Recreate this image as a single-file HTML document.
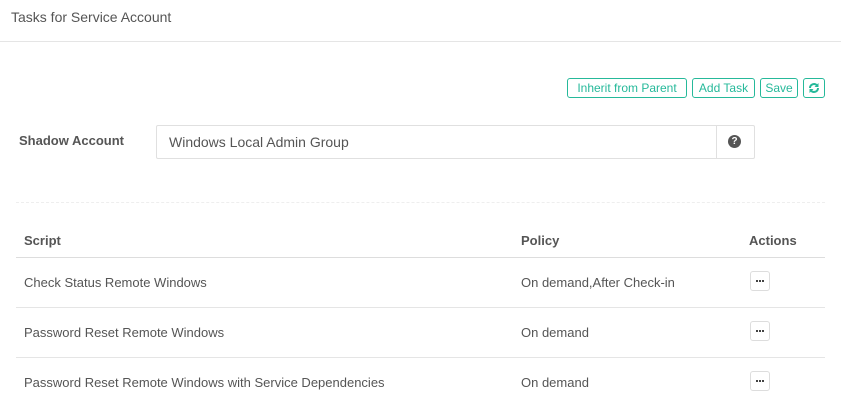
<!DOCTYPE html><html><head><style>
body{margin:0;width:841px;height:410px;background:#fff;font-family:"Liberation Sans",sans-serif;color:#555;position:relative;overflow:hidden}
.a{position:absolute;white-space:nowrap}
.btn{position:absolute;top:78px;height:18px;border:1px solid #26b99a;border-radius:3px;color:#26b99a;font-size:12px;line-height:18px;text-align:center}
.line{position:absolute;left:16px;width:809px;height:1px;background:#e5e5e5}
.ab{position:absolute;left:750px;width:18px;height:18px;border:1px solid #ddd;border-radius:3px;display:flex;align-items:center;justify-content:center;gap:1px}
.ab i{display:block;width:2px;height:2px;background:#444}
</style></head><body>
<div class="a" style="left:11px;top:9px;font-size:14px;color:#555">Tasks for Service Account</div>
<div style="position:absolute;left:0;top:41px;width:841px;height:1px;background:#e5e5e5"></div>
<div class="btn" style="left:567px;width:118px">Inherit from Parent</div>
<div class="btn" style="left:692px;width:61px">Add Task</div>
<div class="btn" style="left:760px;width:36px">Save</div>
<div class="btn" style="left:803px;width:20px"><svg width="12" height="12" viewBox="0 0 12 12" style="margin-top:3px"><path d="M2 6a4 4 0 0 1 7-2.6" stroke="#26b99a" stroke-width="2" fill="none"/><path d="M10.5 1v4h-4z" fill="#26b99a"/><path d="M10 6a4 4 0 0 1-7 2.6" stroke="#26b99a" stroke-width="2" fill="none"/><path d="M1.5 11V7h4z" fill="#26b99a"/></svg></div>
<div class="a" style="left:19px;top:133px;font-size:13px;font-weight:bold;color:#555">Shadow Account</div>
<div style="position:absolute;left:156px;top:125px;width:597px;height:32px;border:1px solid #e0e0e0;border-radius:2px"></div>
<div style="position:absolute;left:716px;top:126px;width:1px;height:32px;background:#e0e0e0"></div>
<div class="a" style="left:169px;top:134px;font-size:14px;color:#555">Windows Local Admin Group</div>
<div style="position:absolute;left:728px;top:135px;width:13px;height:13px;border-radius:50%;background:#555;color:#fff;font-size:10px;font-weight:bold;line-height:13px;text-align:center">?</div>
<div style="position:absolute;left:16px;top:202px;width:809px;border-top:1px dashed #eee"></div>
<div class="a" style="left:24px;top:233px;font-size:13px;font-weight:bold">Script</div>
<div class="a" style="left:521px;top:233px;font-size:13px;font-weight:bold">Policy</div>
<div class="a" style="left:749px;top:233px;font-size:13px;font-weight:bold">Actions</div>
<div class="line" style="top:257px;background:#ddd"></div>
<div class="a" style="left:24px;top:275px;font-size:13px">Check Status Remote Windows</div>
<div class="a" style="left:521px;top:275px;font-size:13px">On demand,After Check-in</div>
<div class="ab" style="top:271px"><i></i><i></i><i></i></div>
<div class="line" style="top:307px"></div>
<div class="a" style="left:24px;top:325px;font-size:13px">Password Reset Remote Windows</div>
<div class="a" style="left:521px;top:325px;font-size:13px">On demand</div>
<div class="ab" style="top:321px"><i></i><i></i><i></i></div>
<div class="line" style="top:357px"></div>
<div class="a" style="left:24px;top:375px;font-size:13px">Password Reset Remote Windows with Service Dependencies</div>
<div class="a" style="left:521px;top:375px;font-size:13px">On demand</div>
<div class="ab" style="top:371px"><i></i><i></i><i></i></div>
</body></html>
